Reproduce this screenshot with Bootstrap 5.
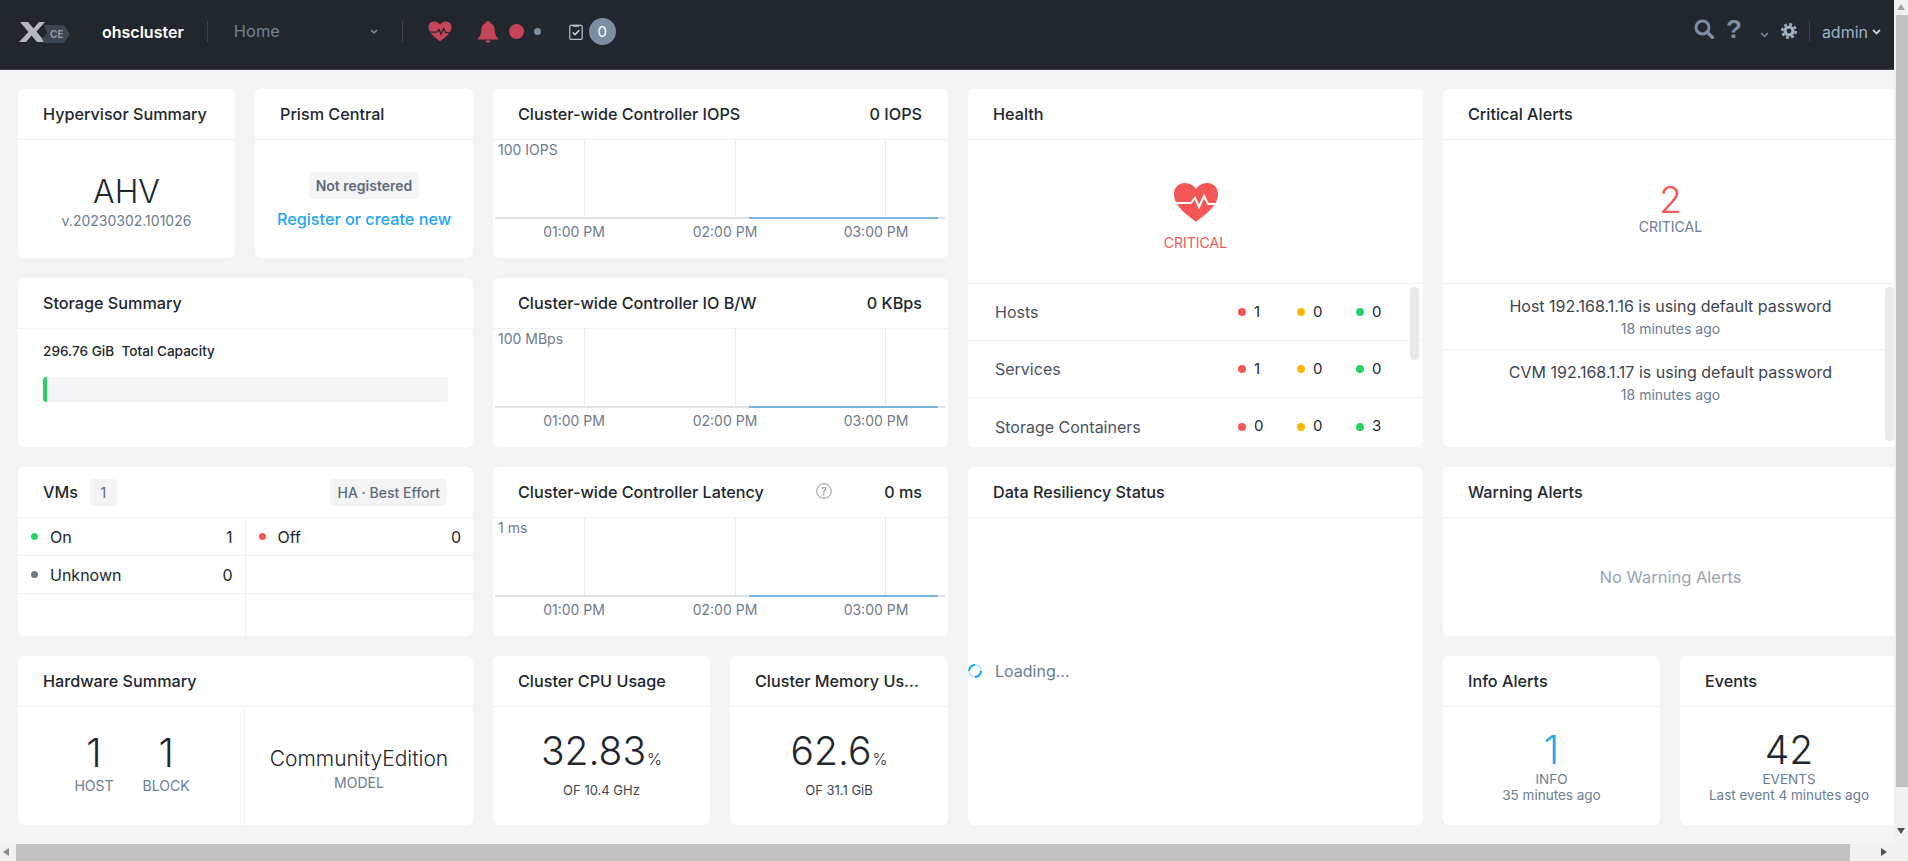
<!DOCTYPE html>
<html lang="en">
<head>
<meta charset="utf-8">
<title>Prism</title>
<link rel="stylesheet" href="https://cdn.jsdelivr.net/npm/bootstrap@5.3.0/dist/css/bootstrap.min.css">
<style>
html,body{height:100%;overflow:hidden}
body{background:#f2f4f6;font-family:"Inter","Open Sans",sans-serif;color:#22272e;font-size:14px}
.shell{height:100vh}
.leftpane{width:1894px;height:100vh;overflow:hidden}
.topbar{height:70px;background:#22272e;border-bottom:1px solid #3c444d;flex:none;padding:0 0 6px}
.navdiv{width:1px;height:21px;background:#3c444d}
.logomark{margin-left:18px}
.clustername{color:#fff;font-size:16px;font-weight:600;margin-left:28px}
.div1{margin-left:23px}
.homelabel{color:#6f8194;font-size:16.5px;width:136px;margin-left:26px}
.div2{margin-left:24px}
.navheart{margin-left:25px}
.navbell{margin-left:25px}
.navclip{margin-left:28px}
.reddot{width:15px;height:15px;border-radius:50%;background:#c6455a;margin-left:10px}
.smalldot{width:7px;height:7px;border-radius:50%;background:#7c8ea3;margin-left:10px}
.countdot{width:27px;height:27px;border-radius:50%;background:#7c8ea3;color:#fff;font-size:15px;line-height:27px;text-align:center;margin-left:6px}
.navtxt{color:#9db0c4;font-size:16px;margin-left:12px}
.rightnav{margin-right:13px}
.navsearch{margin-top:-6px}
.qmark{font-family:"Liberation Sans",sans-serif;font-weight:700;font-size:26px;line-height:1;color:#7c8ea3;margin-left:12px;margin-top:-6px}
.navchev{margin-left:18px;margin-top:6px}
.navgear{margin-left:12px;margin-top:-2px}
.div3{margin-left:12px}
.adminchev{margin-left:4px}
.scrollarea{flex:1;overflow:hidden;padding:19px 0 0 18px}
.dash{display:grid;width:1880px;grid-template-columns:repeat(4,217px 218px);grid-auto-rows:169px;gap:20px}
.w2{grid-column:span 2}
.tall{grid-row:span 2}
.tile{border:0;border-radius:6px;background:#fff;overflow:hidden}
.tile>.card-header{height:51px;background:#fff;border-bottom:1px solid #f0f1f3;padding:0 26px 0 25px;font-size:16.2px;font-weight:550;color:#22272e;display:flex;align-items:center;justify-content:space-between;flex:none;border-radius:0}
.tile .card-body{padding:0;min-height:0}
.tile .shiftdown{padding-top:6px}
.tile .shiftdown2{padding-top:5px}
.hv{font-size:32px;font-weight:300;line-height:36px;color:#22272e}
.subgray{color:#6f7c8b;font-size:14px}
.pill{background:#f2f4f6;border-radius:4px;color:#5f6b78;font-size:14px;font-weight:600;padding:0 7px;line-height:27px;display:inline-block}
.pillcount{min-width:27px;text-align:center;font-weight:400;margin-left:4px}
.pillha{font-weight:500}
.reglink{color:#22a5f7;font-size:16.2px;font-weight:550;text-decoration:none}
.capline{font-size:13.6px;font-weight:550;padding:12px 25px 0}
.capbar{height:25px;background:#f2f4f6;margin:16px 25px 0;border-radius:3px}
.capbar .progress-bar{background:#2ad167;width:4px;border-radius:3px 0 0 3px}
.chartsvg{display:block}
.chartsvg text{font-family:"Inter",sans-serif;font-size:14px;fill:#6f7c8b}
.qicon{margin-top:-2px}
.latright{gap:52px}
.vmgrid{display:grid;grid-template-columns:1fr 1fr;grid-template-rows:38px 38px 1fr;height:118px}
.vmcell{display:flex;align-items:center;padding:0 12px 0 13px;border-bottom:1px solid #f0f1f3;font-size:16px}
.vmcell:nth-child(odd){border-right:1px solid #f0f1f3}
.vmcell:nth-last-child(-n+2){border-bottom:0}
.dotmark{width:7px;height:7px;border-radius:50%;display:inline-block;flex:none}
.vmcell .dotmark{margin-right:12px}
.ok{background:#2ad167}.bad{background:#f55656}.warn{background:#ffb80a}.unk{background:#6f7c8b}
.hwleft{width:227px;border-right:1px solid #f0f1f3;gap:29px}
.hwinner{margin-left:2px}
.bignum{font-size:39px;font-weight:300;line-height:44px;color:#22272e}
.bignum.hwnum{line-height:46px}
.bignum.tightnum{line-height:42px}
.bluenum{color:#22a5f7}
.lab{font-size:14px;color:#6b7d93;line-height:18px}
.lab.tightlab{line-height:16px;font-size:13.5px}
.hwlab{margin-top:1px}
.alertsub{margin-top:3px}
.modelname{font-size:21px;font-weight:300;line-height:30px}
.tile .modelbox{padding-top:3px}
.pct{font-size:16px;font-weight:300;margin-left:1px}
.oftext{font-size:13px;color:#3d4550}
.tile .pctbox{padding-bottom:2px}
.crit{color:#f55656}
.critlabel{font-size:14px;margin-top:10px}
.critnum{font-size:37px;font-weight:300;line-height:36px}
.healthtop{height:144px;border-bottom:1px solid #f0f1f3}
.heartbox{padding-top:12px}
.alertbox{padding-bottom:6px}
.healthrow{height:57px;border-bottom:1px solid #f0f1f3;padding:0 8px 0 27px;font-size:16px;color:#4a5360}
.healthrow.endrow{border-bottom:0}
.stat{width:59px;font-size:15px;color:#22272e;display:flex;align-items:center;gap:8px}
.stat .dotmark{width:8px;height:8px}
.sbthumb{top:147px;right:4px;width:9px;background:#e8eaee;border-radius:4px}
.sb1{height:73px}.sb2{height:154px}
.alertrow{height:66px;border-bottom:1px solid #f0f1f3;font-size:16px;color:#3d4550;line-height:22px;padding-top:11px}
.alertrow.endrow{border-bottom:0}
.none{color:#9aa5b4;font-size:16.5px}
.loadtxt{color:#6b7d93;font-size:16px;margin-left:11px}
.tile .loadbox{padding-bottom:2px}
.hbar{height:17px;flex:none;background:#f1f1f1}
.hthumb{position:absolute;left:16px;width:1834px;top:0;bottom:0;background:#c1c1c1}
.vbar{width:14px;height:100vh;background:#f1f1f1;flex:none}
.vthumb{position:absolute;top:15px;left:2px;right:0;height:772px;background:#c1c1c1}
.tri{position:absolute;width:0;height:0;border-style:solid;border-color:transparent}
.trileft{left:3px;top:4px;border-width:4.5px 6px 4.5px 0;border-right-color:#8a8a8a}
.triright{left:1881px;top:4px;border-width:4.5px 0 4.5px 6px;border-left-color:#505050}
.triup{left:3px;top:4px;border-width:0 4.5px 6px 4.5px;border-bottom-color:#a3a3a3}
.tridown{left:3px;top:828px;border-width:6px 4.5px 0 4.5px;border-top-color:#505050}
</style>
</head>
<body>
<div class="shell d-flex">
  <div class="leftpane d-flex flex-column">
    <nav class="topbar d-flex align-items-center">
      <svg class="logomark" width="56" height="26" viewBox="0 0 56 26" aria-hidden="true">
        <path d="M2 3h8l5.500 6.500L21 3h6l-8.500 9.500L27 23h-8l-5.500-6.500L8 23H1l9.500-10z" fill="#b4b8bd"/>
        <path d="M26 6h20l6 9-6 9H26l-2-4 5-6z" fill="#3b4650"/>
        <text x="32" y="19" font-family="Inter,sans-serif" font-size="10" font-weight="700" fill="#8f9aa5">CE</text>
      </svg>
      <span class="clustername">ohscluster</span>
      <span class="navdiv div1"></span>
      <span class="homelabel">Home</span>
      <svg width="8" height="6" viewBox="0 0 8 6" aria-hidden="true"><path d="M1 1l3 3 3-3" fill="none" stroke="#7c8ea3" stroke-width="1.5"/></svg>
      <span class="navdiv div2"></span>
      <svg class="navheart" width="24" height="21" viewBox="0 0 46 40" aria-hidden="true">
        <path d="M23 39C16 33 1 24 1 12 1 5 6 1 12 1c5 0 9 3 11 6 2-3 6-6 11-6 6 0 11 4 11 11 0 12-15 21-22 27z" fill="#c6455a"/>
        <path d="M0 21h17l4-5 4 9 5-11 4 8h12" fill="none" stroke="#22272e" stroke-width="2.4"/>
      </svg>
      <svg class="navbell" width="22" height="22" viewBox="0 0 22 22" aria-hidden="true">
        <path d="M11 0c1.500 0 2.500 1 2.800 2.500C17 3.500 17.500 6 17.700 10c.2 3.500 1.300 5.500 3.300 7.500v1H1v-1c2-2 3.100-4 3.300-7.500C4.500 6 5 3.500 8.200 2.500 8.500 1 9.500 0 11 0z" fill="#c6455a"/>
        <path d="M8.500 19.500h5c-.4 1.500-1.300 2.300-2.500 2.300s-2.100-.8-2.500-2.300z" fill="#c6455a"/>
      </svg>
      <span class="reddot"></span>
      <span class="smalldot"></span>
      <svg class="navclip" width="14" height="16" viewBox="0 0 14 16" aria-hidden="true">
        <rect x=".8" y="1.300" width="12.400" height="14" rx="1" fill="none" stroke="#b9c2cc" stroke-width="1.2"/>
        <path d="M4 .8h6v2H4z" fill="#b9c2cc"/>
        <path d="M3.800 8.500l2.200 2.200 4.200-4.400" fill="none" stroke="#d9dee3" stroke-width="1.5"/>
      </svg>
      <span class="countdot">0</span>
      <div class="rightnav ms-auto d-flex align-items-center">
        <svg class="navsearch" width="20" height="20" viewBox="0 0 20 20" aria-hidden="true"><circle cx="8.500" cy="8.500" r="6.500" fill="none" stroke="#7c8ea3" stroke-width="3"/><path d="M13 13l5.500 5.500" stroke="#7c8ea3" stroke-width="3.4" stroke-linecap="round"/></svg>
        <span class="qmark">?</span>
        <svg class="navchev" width="9" height="6" viewBox="0 0 9 6" aria-hidden="true"><path d="M1 1l3.500 3.500L8 1" fill="none" stroke="#7c8ea3" stroke-width="1.5"/></svg>
        <svg class="navgear" width="16" height="16" viewBox="0 0 16 16" aria-hidden="true"><circle cx="8" cy="8" r="6.800" fill="none" stroke="#9db0c4" stroke-width="2.4" stroke-dasharray="3 2.340"/><circle cx="8" cy="8" r="4" fill="none" stroke="#9db0c4" stroke-width="3.2"/></svg>
        <span class="navdiv div3"></span>
        <span class="navtxt">admin</span>
        <svg class="adminchev" width="9" height="6" viewBox="0 0 9 6" aria-hidden="true"><path d="M1 1l3.500 3.500L8 1" fill="none" stroke="#c3d0dc" stroke-width="1.8"/></svg>
      </div>
    </nav>

    <main class="scrollarea">
      <div class="dash">
        <section class="card tile">
          <div class="card-header">Hypervisor Summary</div>
          <div class="card-body shiftdown d-flex flex-column align-items-center justify-content-center">
            <div class="hv">AHV</div><div class="subgray">v.20230302.101026</div>
          </div>
        </section>
        <section class="card tile">
          <div class="card-header">Prism Central</div>
          <div class="card-body shiftdown2 d-flex flex-column align-items-center justify-content-center gap-2">
            <span class="pill">Not registered</span><a href="#" class="reglink">Register or create new</a>
          </div>
        </section>
        <section class="card tile w2">
          <div class="card-header"><span>Cluster-wide Controller IOPS</span><span>0 IOPS</span></div>
          <svg class="chartsvg" width="455" height="118" viewBox="0 0 455 118" role="img">
            <path d="M91.500 0v77M242.500 0v77M392.500 0v77" stroke="#e8e9eb"/><path d="M2 78h450" stroke="#e0e1e3" stroke-width="2"/><path d="M256 78h189" stroke="#76b4de" stroke-width="2"/>
            <text x="5" y="15">100 IOPS</text><text x="81" y="97" text-anchor="middle">01:00 PM</text><text x="232" y="97" text-anchor="middle">02:00 PM</text><text x="383" y="97" text-anchor="middle">03:00 PM</text>
          </svg>
        </section>
        <section class="card tile w2 tall">
          <div class="card-header">Health</div>
          <div class="card-body position-relative">
            <div class="healthtop heartbox d-flex flex-column align-items-center justify-content-center">
              <svg width="46" height="40" viewBox="0 0 46 40" aria-hidden="true">
                <path d="M23 40C16 34 1 25 1 12 1 5 6 1 12 1c5 0 9 3 11 6 2-3 6-6 11-6 6 0 11 4 11 11 0 13-15 22-22 28z" fill="#f55656"/>
                <path d="M0 21h18l4-5 4 9 5-11 4 8h11" fill="none" stroke="#fff" stroke-width="2"/>
              </svg>
              <div class="crit critlabel">CRITICAL</div>
            </div>
            <div class="healthrow d-flex align-items-center"><span class="flex-grow-1">Hosts</span><span class="stat"><i class="dotmark bad"></i>1</span><span class="stat"><i class="dotmark warn"></i>0</span><span class="stat"><i class="dotmark ok"></i>0</span></div>
            <div class="healthrow d-flex align-items-center"><span class="flex-grow-1">Services</span><span class="stat"><i class="dotmark bad"></i>1</span><span class="stat"><i class="dotmark warn"></i>0</span><span class="stat"><i class="dotmark ok"></i>0</span></div>
            <div class="healthrow endrow d-flex align-items-center"><span class="flex-grow-1">Storage Containers</span><span class="stat"><i class="dotmark bad"></i>0</span><span class="stat"><i class="dotmark warn"></i>0</span><span class="stat"><i class="dotmark ok"></i>3</span></div>
            <div class="sbthumb sb1 position-absolute"></div>
          </div>
        </section>
        <section class="card tile w2 tall">
          <div class="card-header">Critical Alerts</div>
          <div class="card-body position-relative">
            <div class="healthtop alertbox d-flex flex-column align-items-center justify-content-center">
              <div class="crit critnum">2</div>
              <div class="lab">CRITICAL</div>
            </div>
            <div class="alertrow text-center">Host 192.168.1.16 is using default password<div class="lab alertsub">18 minutes ago</div></div>
            <div class="alertrow endrow text-center">CVM 192.168.1.17 is using default password<div class="lab alertsub">18 minutes ago</div></div>
            <div class="sbthumb sb2 position-absolute"></div>
          </div>
        </section>

        <section class="card tile w2">
          <div class="card-header">Storage Summary</div>
          <div class="card-body">
            <div class="capline">296.76 GiB&nbsp; Total Capacity</div>
            <div class="progress capbar"><div class="progress-bar"></div></div>
          </div>
        </section>
        <section class="card tile w2">
          <div class="card-header"><span>Cluster-wide Controller IO B/W</span><span>0 KBps</span></div>
          <svg class="chartsvg" width="455" height="118" viewBox="0 0 455 118" role="img">
            <path d="M91.500 0v77M242.500 0v77M392.500 0v77" stroke="#e8e9eb"/><path d="M2 78h450" stroke="#e0e1e3" stroke-width="2"/><path d="M256 78h189" stroke="#76b4de" stroke-width="2"/>
            <text x="5" y="15">100 MBps</text><text x="81" y="97" text-anchor="middle">01:00 PM</text><text x="232" y="97" text-anchor="middle">02:00 PM</text><text x="383" y="97" text-anchor="middle">03:00 PM</text>
          </svg>
        </section>

        <section class="card tile w2">
          <div class="card-header"><span class="d-flex align-items-center gap-2">VMs <span class="pill pillcount">1</span></span><span class="pill pillha">HA &#183; Best Effort</span></div>
          <div class="card-body vmgrid">
            <div class="vmcell"><i class="dotmark ok"></i><span class="flex-grow-1">On</span><span>1</span></div>
            <div class="vmcell"><i class="dotmark bad"></i><span class="flex-grow-1">Off</span><span>0</span></div>
            <div class="vmcell"><i class="dotmark unk"></i><span class="flex-grow-1">Unknown</span><span>0</span></div>
            <div class="vmcell"></div>
            <div class="vmcell"></div>
            <div class="vmcell"></div>
          </div>
        </section>
        <section class="card tile w2">
          <div class="card-header"><span>Cluster-wide Controller Latency</span>
            <span class="latright d-flex align-items-center">
              <svg class="qicon" width="16" height="16" viewBox="0 0 16 16" aria-hidden="true"><circle cx="8" cy="8" r="7.300" fill="none" stroke="#8f9aa5"/><text x="8" y="11.500" text-anchor="middle" font-family="Inter,sans-serif" font-size="10" fill="#8f9aa5">?</text></svg>
              0 ms</span></div>
          <svg class="chartsvg" width="455" height="118" viewBox="0 0 455 118" role="img">
            <path d="M91.500 0v77M242.500 0v77M392.500 0v77" stroke="#e8e9eb"/><path d="M2 78h450" stroke="#e0e1e3" stroke-width="2"/><path d="M256 78h189" stroke="#76b4de" stroke-width="2"/>
            <text x="5" y="15">1 ms</text><text x="81" y="97" text-anchor="middle">01:00 PM</text><text x="232" y="97" text-anchor="middle">02:00 PM</text><text x="383" y="97" text-anchor="middle">03:00 PM</text>
          </svg>
        </section>
        <section class="card tile w2 tall">
          <div class="card-header">Data Resiliency Status</div>
          <div class="card-body loadbox d-flex align-items-center">
            <svg width="16" height="16" viewBox="0 0 16 16" aria-hidden="true"><circle cx="7" cy="8" r="6" fill="none" stroke="#bfe3fb" stroke-width="2"/><path d="M7 14a6 6 0 0 0 6-6" fill="none" stroke="#22a5f7" stroke-width="2"/><path d="M1 8a6 6 0 0 1 6-6" fill="none" stroke="#22a5f7" stroke-width="2"/></svg>
            <span class="loadtxt">Loading...</span>
          </div>
        </section>
        <section class="card tile w2">
          <div class="card-header">Warning Alerts</div>
          <div class="card-body d-flex align-items-center justify-content-center"><span class="none">No Warning Alerts</span></div>
        </section>

        <section class="card tile w2">
          <div class="card-header">Hardware Summary</div>
          <div class="card-body d-flex">
            <div class="hwleft d-flex align-items-center justify-content-center text-center pb-2">
              <div class="hwinner"><div class="bignum hwnum">1</div><div class="lab hwlab">HOST</div></div>
              <div><div class="bignum hwnum">1</div><div class="lab hwlab">BLOCK</div></div>
            </div>
            <div class="modelbox flex-grow-1 d-flex flex-column align-items-center justify-content-center">
              <div class="modelname">CommunityEdition</div><div class="lab">MODEL</div>
            </div>
          </div>
        </section>
        <section class="card tile">
          <div class="card-header">Cluster CPU Usage</div>
          <div class="card-body pctbox d-flex flex-column align-items-center justify-content-center">
            <div class="bignum">32.83<span class="pct">%</span></div><div class="oftext">OF 10.4 GHz</div>
          </div>
        </section>
        <section class="card tile">
          <div class="card-header">Cluster Memory Us...</div>
          <div class="card-body pctbox d-flex flex-column align-items-center justify-content-center">
            <div class="bignum">62.6<span class="pct">%</span></div><div class="oftext">OF 31.1 GiB</div>
          </div>
        </section>
        <section class="card tile">
          <div class="card-header">Info Alerts</div>
          <div class="card-body d-flex flex-column align-items-center justify-content-center text-center">
            <div class="bignum tightnum bluenum">1</div><div class="lab tightlab">INFO</div><div class="lab tightlab">35 minutes ago</div>
          </div>
        </section>
        <section class="card tile">
          <div class="card-header">Events</div>
          <div class="card-body d-flex flex-column align-items-center justify-content-center text-center">
            <div class="bignum tightnum">42</div><div class="lab tightlab">EVENTS</div><div class="lab tightlab">Last event 4 minutes ago</div>
          </div>
        </section>
      </div>
    </main>

    <div class="hbar position-relative">
      <div class="hthumb"></div>
      <span class="tri trileft"></span>
      <span class="tri triright"></span>
    </div>
  </div>
  <div class="vbar position-relative">
    <div class="vthumb"></div>
    <span class="tri triup"></span>
    <span class="tri tridown"></span>
  </div>
</div>
<script src="https://cdn.jsdelivr.net/npm/bootstrap@5.3.0/dist/js/bootstrap.bundle.min.js"></script>
</body>
</html>
